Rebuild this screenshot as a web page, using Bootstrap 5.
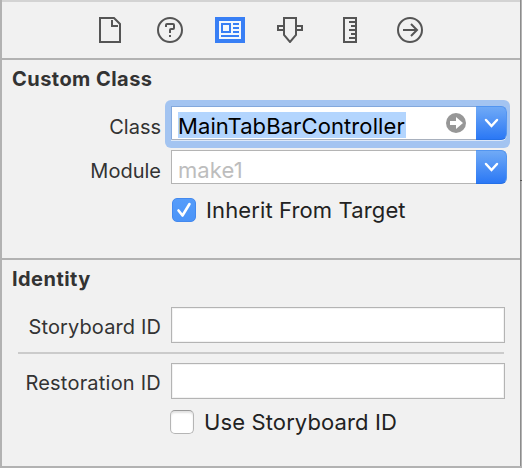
<!DOCTYPE html>
<html lang="en">
<head>
<meta charset="utf-8">
<title>Identity Inspector</title>
<link href="https://cdn.jsdelivr.net/npm/bootstrap@5.3.0/dist/css/bootstrap.min.css" rel="stylesheet">
<style>
body{font-family:Inter,"Liberation Sans",sans-serif;background:#f1f1f1;color:#333;font-size:20px;line-height:24px;overflow:hidden}
.inspector{width:522px;height:468px;border-left:2px solid #b2b2b2;border-bottom:2px solid #b2b2b2}
.edge{width:2px;height:466px;background:linear-gradient(90deg,#8c8c8c 50%,#b4b4b4 50%)}
.edge-tick{width:2px;height:1px;margin-top:180px;background:#555}
.tabs-bar{height:60px;border-top:2px solid #d3d3d3;border-bottom:2px solid #b2b2b2;padding:15px 0 0 92px}
.tabs-bar svg{width:32px;height:26px;flex:none;fill:none;stroke:#555;stroke-width:2;margin-right:28px}
.custom-sec{height:200px;border-bottom:2px solid #b2b2b2;padding-top:7px}
.identity-sec{padding-top:7px}
.sec-title{font-size:20px;font-weight:700;line-height:24px;padding-left:10px;letter-spacing:.45px}
.lbl{width:159px;flex:none;text-align:right;white-space:nowrap}
.custom-sec .lbl{padding-top:6px}
.custom-sec .module-row .lbl{padding-top:8px}
.identity-sec .lbl{padding-top:3px;letter-spacing:.12px}
.identity-sec .lbl.wider{letter-spacing:.22px}
.field{width:334px;height:36px;background:#fff;border:1px solid #b4b4b4;box-shadow:inset 0 0 0 1px #f3f3f3;margin-left:10px;flex:none}
.combo{width:336px;height:34px;background:#fff;border:1px solid #b4b4b4;border-right:0;border-radius:0 6px 6px 0;margin-left:10px;flex:none;color:#000;font-size:22px}
.ring{width:345px;height:48px;background:#a3c4f1;border-radius:6px;margin-left:4px;padding:6px 3px 8px 6px;flex:none}
.ring .combo{margin:0;border-color:#83a8dc;border-bottom-color:#a8b0bd;box-shadow:0 1px 0 #dce8f8}
.entry{height:26px;line-height:29px;margin:5px 0 0 6px;width:228px;white-space:nowrap;letter-spacing:.1px}
.entry.sel{background:#b3d5fe}
.entry.hint{color:#bdbdbd}
.go{width:20px;height:20px;margin:6px 10px 0 auto}
.drop{width:31px;height:34px;margin-top:-1px;border-radius:0 6px 6px 0;border:1px solid #5295f0;border-left:0;border-bottom-color:#2470e8;background:linear-gradient(#70aaf6,#2b78f5)}
.drop svg{display:block;width:31px;height:32px;fill:none;stroke:#fff;stroke-width:2.5;stroke-linecap:round}
.class-row{margin-top:9px}
.module-row{margin-top:2px}
.story-row{margin-top:16px}
.inherit-row{margin:13px 0 0 170px}
.use-row{margin:10px 0 0 168px}
.check{width:24px;height:24px;border-radius:5px;flex:none}
.check.on{background:linear-gradient(#559cfa,#4b94f8);border:1px solid #4489ee}
.check.off{background:#fff;border:1px solid #b5b5b5;border-top-color:#999;box-shadow:inset 0 2px 2px #e2e2e2}
.check-text{font-size:22px;color:#222;line-height:26px;white-space:nowrap;margin-left:10px;letter-spacing:.12px}
.rule{height:2px;width:486px;background:#cbcbcb;margin:9px 0 9px 16px}
</style>
</head>
<body>
<div class="inspector d-flex">
<main class="flex-grow-1">
  <nav class="tabs-bar d-flex">
    <svg viewBox="0 0 32 26"><path d="M6 1h14l6 6v18H6zM18 3v6h6"/></svg>
    <svg viewBox="0 0 32 26"><circle cx="16" cy="13" r="12"/><path d="M12 10V8q0-1 1-1h6q1 0 1 1v3q0 1-1 1h-2q-1 0-1 1v3M15 19h2"/></svg>
    <svg viewBox="0 0 32 26"><path fill="#387ff5" stroke="none" d="M1 0h30v26H1z"/><path fill="#f4f7fc" stroke="none" d="M5 4h22v18H5z"/><path stroke="#387ff5" d="M8 7h8v8H8zM19 7h6M19 11h6M19 15h6M7 19h18"/></svg>
    <svg viewBox="0 0 32 26"><path d="M10 1h12v17l-6 7-6-7zM9 9H4v4h5M23 9h5v4h-5"/></svg>
    <svg viewBox="0 0 32 26"><path d="M10 1h12v24H10zM15 5h6M17 9h4M15 13h6M17 17h4M15 21h6"/></svg>
    <svg viewBox="0 0 32 26"><circle cx="16" cy="13" r="12"/><path d="M9 13h13M17 7l6 6-6 6"/></svg>
  </nav>
  <section class="custom-sec">
    <div class="sec-title">Custom Class</div>
    <div class="d-flex align-items-center class-row">
      <div class="lbl">Class</div>
      <div class="ring"><div class="combo d-flex"><div class="entry sel">MainTabBarController</div>
        <svg class="go" viewBox="0 0 20 20"><circle cx="10" cy="10" r="10" fill="#979797"/><path fill="#fff" d="M4 8h6V4l7 6-7 6v-4H4z"/></svg>
        <div class="drop"><svg viewBox="0 0 31 32"><path d="M10 13l5.500 6 5.500-6"/></svg></div></div></div>
    </div>
    <div class="d-flex align-items-center module-row">
      <div class="lbl">Module</div>
      <div class="combo d-flex"><div class="entry hint">make1</div>
        <div class="drop ms-auto"><svg viewBox="0 0 31 32"><path d="M10 13l5.500 6 5.500-6"/></svg></div></div>
    </div>
    <div class="d-flex align-items-center inherit-row">
      <div class="check on"><svg viewBox="0 0 22 22" class="d-block"><path d="M5.500 11.500l4 5L16.500 5" fill="none" stroke="#fff" stroke-width="2.600" stroke-linecap="round" stroke-linejoin="round"/></svg></div>
      <div class="check-text">Inherit From Target</div>
    </div>
  </section>
  <section class="identity-sec">
    <div class="sec-title">Identity</div>
    <div class="d-flex align-items-center story-row"><div class="lbl">Storyboard ID</div><div class="field"></div></div>
    <div class="rule"></div>
    <div class="d-flex align-items-center"><div class="lbl wider">Restoration ID</div><div class="field"></div></div>
    <div class="d-flex align-items-center use-row">
      <div class="check off"></div><div class="check-text">Use Storyboard ID</div>
    </div>
  </section>
</main>
<aside class="edge"><div class="edge-tick"></div></aside>
</div>
<script src="https://cdn.jsdelivr.net/npm/bootstrap@5.3.0/dist/js/bootstrap.bundle.min.js"></script>
</body>
</html>
